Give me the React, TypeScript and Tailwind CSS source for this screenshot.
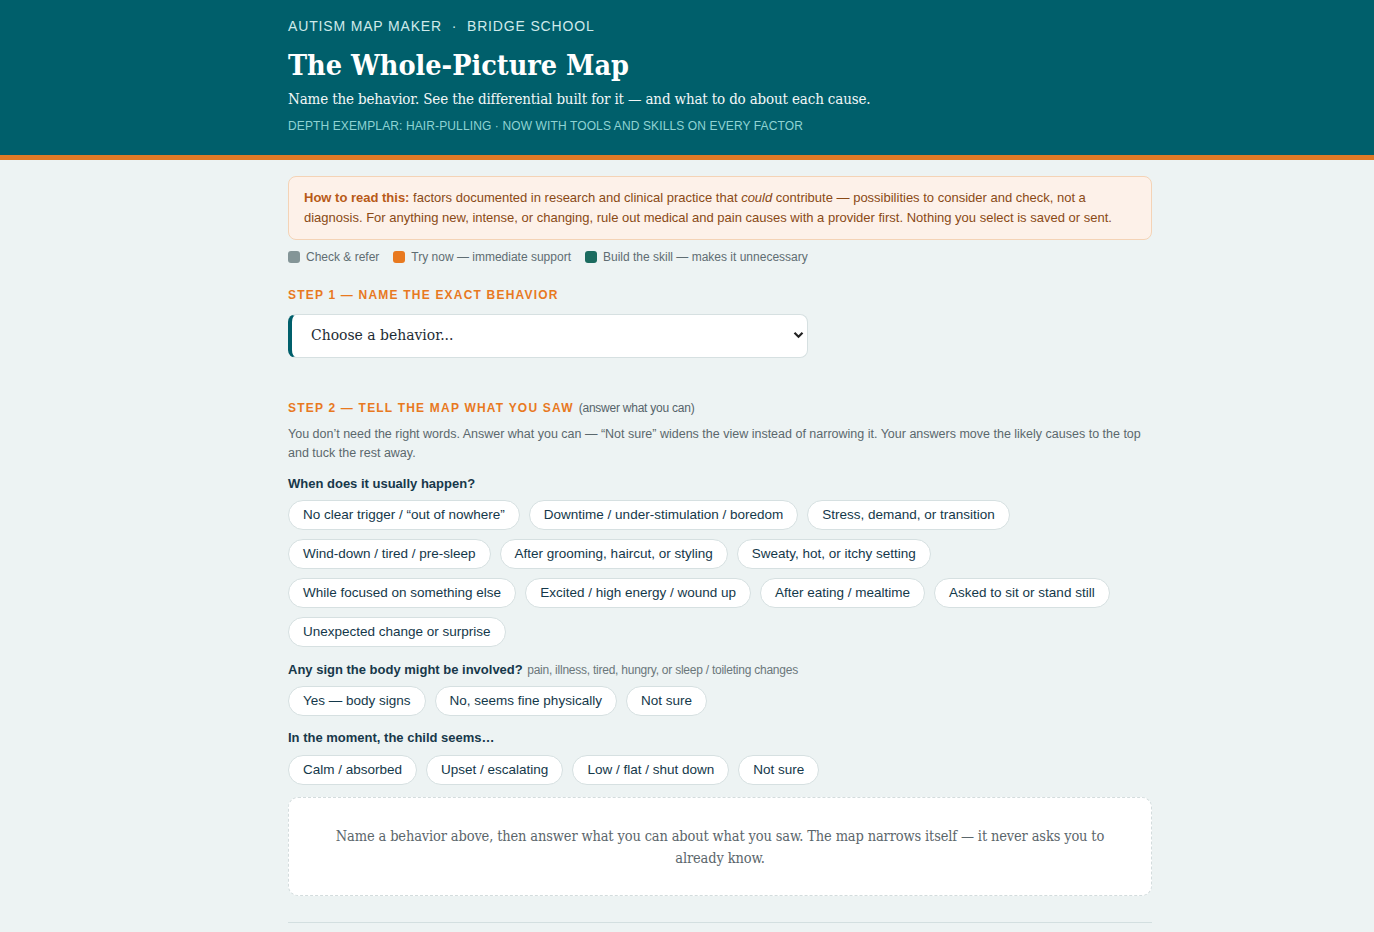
import { useState } from "react";

const SANS = "font-['Liberation_Sans',Arial,sans-serif]";
const SERIF = "font-['DejaVu_Serif',Georgia,serif] font-stretch-condensed";

const WHEN = [
  "No clear trigger / “out of nowhere”",
  "Downtime / under-stimulation / boredom",
  "Stress, demand, or transition",
  "Wind-down / tired / pre-sleep",
  "After grooming, haircut, or styling",
  "Sweaty, hot, or itchy setting",
  "While focused on something else",
  "Excited / high energy / wound up",
  "After eating / mealtime",
  "Asked to sit or stand still",
  "Unexpected change or surprise",
];

const BODY = ["Yes — body signs", "No, seems fine physically", "Not sure"];
const MOOD = ["Calm / absorbed", "Upset / escalating", "Low / flat / shut down", "Not sure"];

function Pills({ items, picked, onPick }: { items: string[]; picked: string[]; onPick: (v: string) => void }) {
  return (
    <div className="flex flex-wrap gap-[9px]">
      {items.map(t => (
        <button
          key={t}
          onClick={() => onPick(t)}
          className={`h-[30px] px-[14px] rounded-full border text-[13.5px] leading-none ${
            picked.includes(t)
              ? "bg-[#005f6b] border-[#005f6b] text-white"
              : "bg-white border-[#d6e0e1] text-[#14384a]"
          }`}
        >
          {t}
        </button>
      ))}
    </div>
  );
}

export default function App() {
  const [behavior, setBehavior] = useState("");
  const [picked, setPicked] = useState<string[]>([]);

  function toggle(v: string) {
    setPicked(p => (p.includes(v) ? p.filter(x => x !== v) : [...p, v]));
  }

  return (
    <div className={`min-h-screen bg-[#edf3f3] ${SANS}`}>
      {/* Cabecera */}
      <header className="bg-[#005f6b] border-b-[5px] border-[#e07a26]">
        <div className="ml-[288px] w-[864px] pt-[17px] pb-[21px]">
          <div className="text-[14px] tracking-[0.06em] text-[#cfeaea] leading-[18px]">
            AUTISM MAP MAKER <span className="mx-[5px]">·</span> BRIDGE SCHOOL
          </div>
          <h1 className={`${SERIF} mt-[11px] text-[28.5px] font-bold text-white leading-[38px]`}>
            The Whole-Picture Map
          </h1>
          <p className={`${SERIF} mt-[4px] text-[15px] text-[#f2f7f7] leading-[22px] tracking-[-0.01em]`}>
            Name the behavior. See the differential built for it — and what to do about each cause.
          </p>
          <div className="mt-[8px] text-[12px] text-[#8fd3d3] leading-[16px] tracking-[0.01em]">
            DEPTH EXEMPLAR: HAIR-PULLING · NOW WITH TOOLS AND SKILLS ON EVERY FACTOR
          </div>
        </div>
      </header>

      <main className="ml-[288px] w-[864px] pt-[16px] pb-[9px]">
        {/* Aviso */}
        <div className="rounded-[8px] border border-[#f4d3b6] bg-[#fdf1e9] px-[15px] py-[11px] text-[13px] leading-[20px] text-[#8a4a16]">
          <b className="text-[#b85a18]">How to read this:</b> factors documented in research and clinical practice that{" "}
          <i>could</i> contribute — possibilities to consider and check, not a diagnosis. For anything new, intense, or
          changing, rule out medical and pain causes with a provider first. Nothing you select is saved or sent.
        </div>

        {/* Leyenda */}
        <div className="mt-[8px] flex items-center gap-[14px] text-[12px] text-[#5f6d72]">
          <span className="flex items-center gap-[6px]">
            <span className="w-[12px] h-[12px] rounded-[3px] bg-[#849597]" /> Check &amp; refer
          </span>
          <span className="flex items-center gap-[6px]">
            <span className="w-[12px] h-[12px] rounded-[3px] bg-[#e8791f]" /> Try now — immediate support
          </span>
          <span className="flex items-center gap-[6px]">
            <span className="w-[12px] h-[12px] rounded-[3px] bg-[#1b6b5f]" /> Build the skill — makes it unnecessary
          </span>
        </div>

        {/* Paso 1 */}
        <div className="mt-[21px] text-[12px] font-bold tracking-[0.1em] text-[#e8791f] leading-[16px]">
          STEP 1 — NAME THE EXACT BEHAVIOR
        </div>
        <div className="mt-[11px] relative w-[520px] h-[44px] rounded-[8px] border border-[#d6e0e1] border-l-[4px] border-l-[#005f6b] bg-white">
          <select
            value={behavior}
            onChange={e => setBehavior(e.target.value)}
            className={`${SERIF} appearance-none w-full h-full bg-transparent pl-[19px] pr-[30px] text-[15.5px] text-[#1d2b33] focus:outline-none`}
          >
            <option value="">Choose a behavior...</option>
            <option value="hair">Hair-pulling</option>
            <option value="hit">Hitting others</option>
            <option value="elope">Running away</option>
          </select>
          <svg className="pointer-events-none absolute right-[3px] top-[16px]" width="11" height="8" viewBox="0 0 11 8">
            <path d="M1.5 1.8 L5.5 5.8 L9.5 1.8" fill="none" stroke="#222" strokeWidth="2.2" />
          </svg>
        </div>

        {/* Paso 2 */}
        <div className="mt-[42px] flex items-baseline gap-[5px] leading-[16px]">
          <span className="text-[12px] font-bold tracking-[0.1em] text-[#e8791f]">STEP 2 — TELL THE MAP WHAT YOU SAW</span>
          <span className="text-[12px] text-[#56646a] tracking-[-0.02em]">(answer what you can)</span>
        </div>
        <p className="mt-[9px] text-[12.5px] leading-[19px] text-[#5b686d]">
          You don’t need the right words. Answer what you can — “Not sure” widens the view instead of narrowing it. Your
          answers move the likely causes to the top and tuck the rest away.
        </p>

        <div className="mt-[12px] text-[13px] font-bold text-[#17384a] leading-[18px]">When does it usually happen?</div>
        <div className="mt-[7px]">
          <Pills items={WHEN} picked={picked} onPick={toggle} />
        </div>

        <div className="mt-[13px] leading-[18px]">
          <span className="text-[13px] font-bold text-[#17384a]">Any sign the body might be involved?</span>{" "}
          <span className="text-[12px] text-[#6b777b] tracking-[-0.02em]">pain, illness, tired, hungry, or sleep / toileting changes</span>
        </div>
        <div className="mt-[7px]">
          <Pills items={BODY} picked={picked} onPick={toggle} />
        </div>

        <div className="mt-[13px] text-[13px] font-bold text-[#17384a] leading-[18px]">In the moment, the child seems…</div>
        <div className="mt-[8px]">
          <Pills items={MOOD} picked={picked} onPick={toggle} />
        </div>

        {/* Estado vacío */}
        <div className="mt-[12px] h-[99px] rounded-[10px] border border-dashed border-[#d3dcdd] bg-white flex items-center justify-center px-[40px]">
          <p className={`${SERIF} text-center text-[14.5px] leading-[22px] text-[#5b666b] tracking-[-0.01em]`}>
            Name a behavior above, then answer what you can about what you saw. The map narrows itself — it never asks you
            to already know.
          </p>
        </div>

        <div className="mt-[26px] border-t border-[#d3dfe0]" />
      </main>
    </div>
  );
}
